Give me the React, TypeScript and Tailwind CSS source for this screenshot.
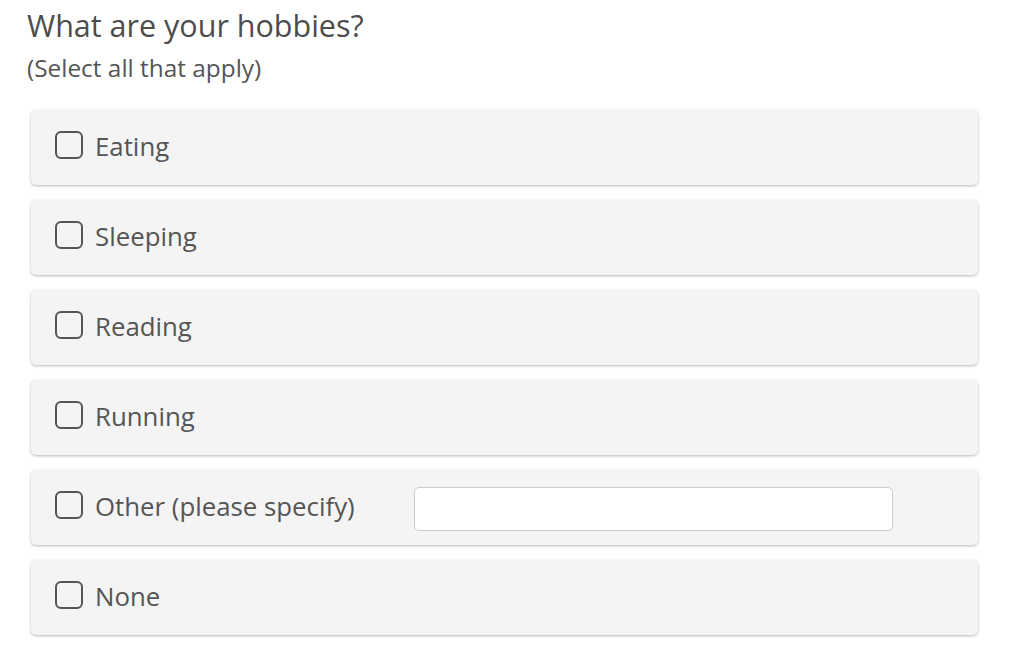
const options = ['Eating', 'Sleeping', 'Reading', 'Running', 'Other (please specify)', 'None'];

function Box() {
  return <span className="mb-[5px] block h-[28px] w-[28px] shrink-0 rounded-[6px] border-[2.5px] border-[#555555] bg-transparent" />;
}

export default function App() {
  return (
    <div className="min-h-screen bg-white pl-[27px] pr-[49px] pt-[5px] text-[#555555]" style={{ fontFamily: '"Open Sans", sans-serif' }}>
      <h1 className="text-[30.5px] leading-[40px] text-[#4d4d4d]">What are your hobbies?</h1>
      <p className="mt-[8px] text-[24.4px] leading-[30px] text-[#555555]">(Select all that apply)</p>
      <div className="mt-[27px] ml-[4px] flex flex-col gap-[15px]">
        {options.map((o) => (
          <label key={o} className="flex h-[75px] items-center rounded-[5px] bg-[#f4f4f4] pl-[24px] shadow-[0_1px_3px_rgba(0,0,0,0.28)]">
            <Box />
            <span className="mb-[4px] ml-[12px] text-[25.8px] leading-[34px]">{o}</span>
            {o.startsWith('Other') && (
              <input type="text" className="mt-[3px] ml-[59px] h-[44px] w-[479px] rounded-[5px] border border-[#cccccc] bg-white outline-none" />
            )}
          </label>
        ))}
      </div>
    </div>
  );
}
